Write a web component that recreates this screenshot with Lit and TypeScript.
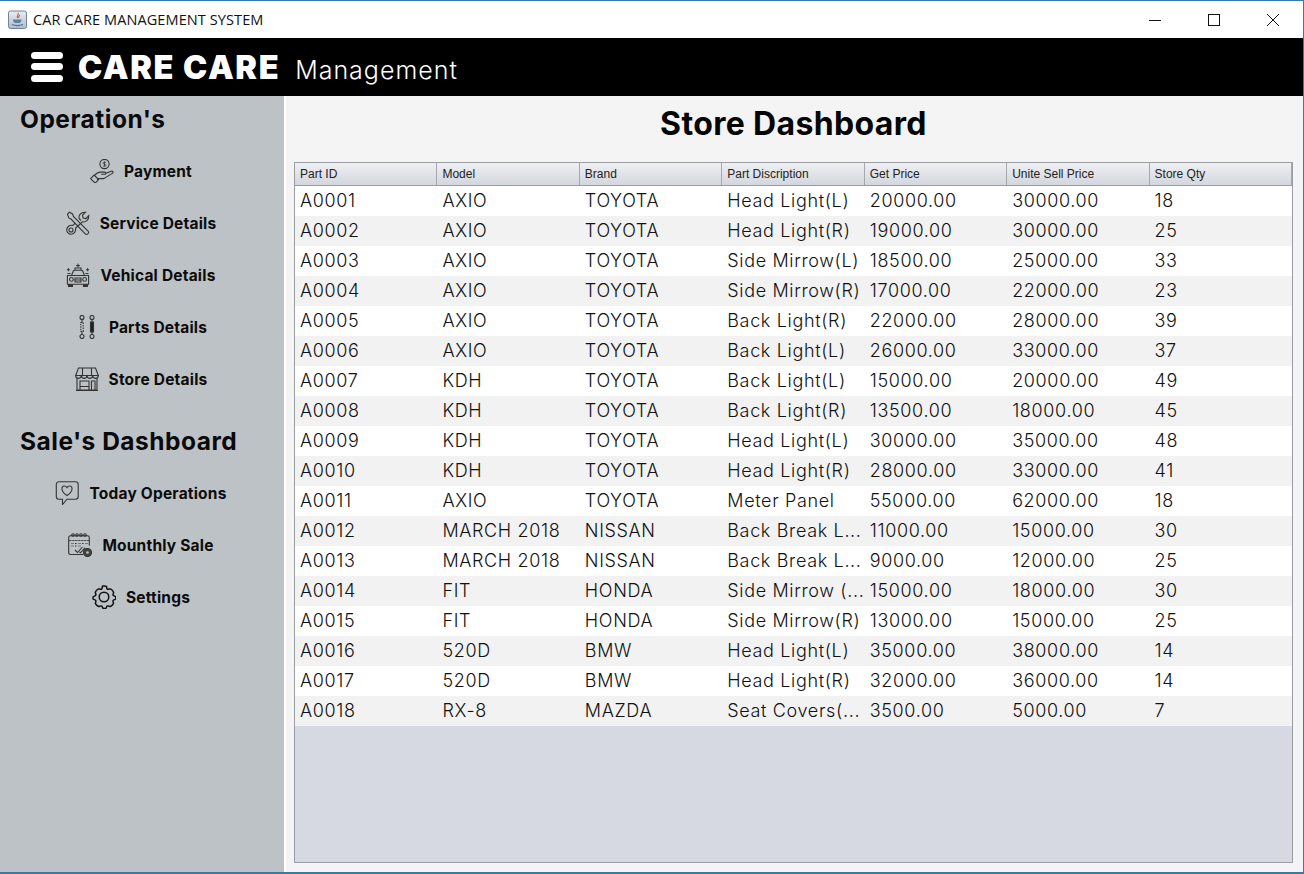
import { LitElement, html, css, svg } from "lit";
import { customElement } from "lit/decorators.js";

const columns = ["Part ID", "Model", "Brand", "Part Discription", "Get Price", "Unite Sell Price", "Store Qty"];

const rows = [
  ["A0001", "AXIO", "TOYOTA", "Head Light(L)", "20000.00", "30000.00", "18"],
  ["A0002", "AXIO", "TOYOTA", "Head Light(R)", "19000.00", "30000.00", "25"],
  ["A0003", "AXIO", "TOYOTA", "Side Mirrow(L)", "18500.00", "25000.00", "33"],
  ["A0004", "AXIO", "TOYOTA", "Side Mirrow(R)", "17000.00", "22000.00", "23"],
  ["A0005", "AXIO", "TOYOTA", "Back Light(R)", "22000.00", "28000.00", "39"],
  ["A0006", "AXIO", "TOYOTA", "Back Light(L)", "26000.00", "33000.00", "37"],
  ["A0007", "KDH", "TOYOTA", "Back Light(L)", "15000.00", "20000.00", "49"],
  ["A0008", "KDH", "TOYOTA", "Back Light(R)", "13500.00", "18000.00", "45"],
  ["A0009", "KDH", "TOYOTA", "Head Light(L)", "30000.00", "35000.00", "48"],
  ["A0010", "KDH", "TOYOTA", "Head Light(R)", "28000.00", "33000.00", "41"],
  ["A0011", "AXIO", "TOYOTA", "Meter Panel", "55000.00", "62000.00", "18"],
  ["A0012", "MARCH 2018", "NISSAN", "Back Break L...", "11000.00", "15000.00", "30"],
  ["A0013", "MARCH 2018", "NISSAN", "Back Break L...", "9000.00", "12000.00", "25"],
  ["A0014", "FIT", "HONDA", "Side Mirrow (...", "15000.00", "18000.00", "30"],
  ["A0015", "FIT", "HONDA", "Side Mirrow(R)", "13000.00", "15000.00", "25"],
  ["A0016", "520D", "BMW", "Head Light(L)", "35000.00", "38000.00", "14"],
  ["A0017", "520D", "BMW", "Head Light(R)", "32000.00", "36000.00", "14"],
  ["A0018", "RX-8", "MAZDA", "Seat Covers(...", "3500.00", "5000.00", "7"],
];

const icons = {
  payment: svg`<circle cx="14.5" cy="5" r="4.6"/><path d="M14.5 2.600v4.800M16 3.600c-.8-.7-3-.7-3 .6s3 .9 3 2.100-2.200 1.300-3 .6" stroke-width=".8"/><path d="M4.500 16.500c2-2.500 4-3.400 6-3.400h4.200c1.400 0 1.400 2.200 0 2.200h-3.400M15.500 14.600l5.600-2.400c1.800-.6 2.800 1.200 1.200 2.200l-7.300 4.500c-1.600.9-3.300.9-5 .6-1-.2-2 .2-3 1"/><path d="M.6 19.600l3.500-3.600 4.600 4.600-3.600 3.600z"/>`,
  service: svg`<path d="M1.500 3.200L3.400 1.200 6.600 3 7.400 5.400 22 20c1 1.200.9 2-.2 2.900-1 .8-1.800.7-2.800-.3L5 8 2.900 7.200z"/><path d="M15 9.500l-1.900-1.900c-.8-3.200 1.400-6.600 6.400-6.400l-3 3 .6 2.800 2.700.6 3-3c.2 4.500-3.200 7-6.400 6.300L9.600 17c.9 3.400-1.700 6.300-4.500 6.300C2.600 23.300.7 21.200.7 18.900c0-3 3-5.300 6.100-4.400l2.500-2.400"/><circle cx="5" cy="19" r="2"/>`,
  vehicle: svg`<path d="M12 .6v4M10 2.600h4M2.400 5.200v3M.9 6.700h3M21.600 5.200v3M20.100 6.700h3" stroke-width="1"/><path d="M5.500 12.500l1.700-4.300c.3-.7.7-1 1.500-1h6.600c.8 0 1.200.3 1.500 1l1.700 4.300"/><path d="M9 7V5h6v2M1 12.500h22M1.400 12.500v8.800h21.200v-8.800"/><path d="M2.500 21.300V24h4v-2.700M17.500 21.300V24h4v-2.700" fill="#333"/><circle cx="5.400" cy="16.400" r="1.900"/><circle cx="18.600" cy="16.400" r="1.900"/><path d="M9 15h6v4H9zM9 17h6M1.500 10.500h3M19.500 10.500h3"/>`,
  parts: svg`<circle cx="7" cy="2.500" r="2"/><circle cx="7" cy="21.500" r="2"/><circle cx="17" cy="2.500" r="2"/><circle cx="17" cy="21.500" r="2"/><path d="M7 4.500v3M7 16.500v3M17 4.500v3M17 16.500v3"/><path d="M5.800 7.500h2.400v9H5.800z" stroke-dasharray="1.500 1"/><path d="M15.500 7h3v10h-3z" fill="#222"/>`,
  store: svg`<path d="M3.500 1h17l2.800 7.500H.7z"/><path d="M.7 8.500c0 3.800 5.300 3.800 5.650 0 .35 3.800 5.300 3.800 5.650 0 .35 3.800 5.300 3.800 5.650 0 .35 3.800 5.650 3.800 5.650 0"/><path d="M2 11v12h20V11M5 23V14h9v9M16.500 23V14h3.500v9M5 19.500h9M7.500 1v7.500M16.500 1v7.500M1 23.500h22"/>`,
  today: svg`<path d="M4 .8h16.500c1.600 0 2.700 1.100 2.700 2.700v12c0 1.600-1.100 2.700-2.700 2.700H12l-4.500 5.300v-5.300H4c-1.600 0-2.700-1.100-2.700-2.700v-12C1.300 1.900 2.400.8 4 .8z"/><path d="M12 14.500C5.500 10.500 6 5 9.400 5c1.200 0 2 .6 2.600 1.600C12.600 5.600 13.400 5 14.600 5 18 5 18.500 10.500 12 14.500z"/>`,
  sale: svg`<path d="M15 21.500H2.400c-1 0-1.700-.7-1.700-1.700V4.500c0-1 .7-1.700 1.700-1.700h17.200c1 0 1.700.7 1.700 1.700v8"/><path d="M.7 7.500h20.600M3.500 10.500h2M7 10.500h2M10.500 10.500h2M14 10.500h2M17.500 10.500h2M3.500 13h2M7 13h2M10.500 13h2" stroke-dasharray="1 .5"/><circle cx="5" cy="2" r="1.300"/><circle cx="9" cy="2" r="1.300"/><circle cx="13" cy="2" r="1.300"/><circle cx="17" cy="2" r="1.300"/><path d="M7 17l2.500 2.500 5-5.500M11.500 19l1 .8 4.500-5" stroke-width="1.100"/><circle cx="19.500" cy="19.500" r="4" fill="#444" stroke="#333"/><circle cx="19.500" cy="19.500" r="1.300" fill="#bdc2c6" stroke="none"/>`,
  settings: svg`<circle cx="12" cy="12" r="4.800" stroke="#111" stroke-width="1.500"/><path stroke="#111" stroke-width="1.500" d="M12 .9c1 0 2 .1 2.400.4.300.9.100 2.300.9 2.800.9.600 2.300-.4 3.200-.2 1 .6 2.700 2.300 3.100 3.300.1.900-1 2.100-.5 3 .5.900 2 .9 2.600 1.600.2.600.2 1.700-.1 2.400-.7.500-2.100.5-2.500 1.400-.4 1 .5 2.200.4 3-.6 1-2.200 2.500-3.200 2.900-.9 0-2-1-3-.5-.9.400-.8 1.800-1.500 2.400-.8.200-1.900.2-2.700 0-.6-.6-.6-2-1.500-2.400-1-.5-2.100.5-3 .5-1-.4-2.600-1.900-3.200-2.900-.1-.8.800-2 .4-3-.4-.9-1.800-.9-2.500-1.400-.3-.7-.3-1.800-.1-2.400.6-.7 2.100-.7 2.600-1.600.5-.9-.6-2.100-.5-3 .4-1 2.100-2.700 3.100-3.300.9-.2 2.300.8 3.200.2.800-.5.600-1.900.9-2.800C10 1 11 .9 12 .9z"/>`,
};

const menu1 = [
  ["payment", "Payment"],
  ["service", "Service Details"],
  ["vehicle", "Vehical Details"],
  ["parts", "Parts Details"],
  ["store", "Store Details"],
];

const menu2 = [
  ["today", "Today Operations"],
  ["sale", "Mounthly Sale"],
  ["settings", "Settings"],
];

@customElement("app-root")
export class AppRoot extends LitElement {
  static styles = css`
    :host {
      display: flex;
      flex-direction: column;
      width: 1304px;
      height: 874px;
      box-sizing: border-box;
      border-top: 1px solid #2f7cb8;
      border-right: 1px solid #2f7cb8;
      border-bottom: 2px solid #3a7a9c;
      background: #fff;
      overflow: hidden;
      font-family: Inter, "Liberation Sans", sans-serif;
      color: #000;
    }
    .titlebar {
      flex: 0 0 37px;
      display: flex;
      align-items: center;
      padding: 0 0 0 8px;
      background: #fff;
    }
    .titlebar .app-icon {
      width: 20px;
      height: 20px;
      margin-right: 5px;
    }
    .titlebar .name {
      font-family: "Open Sans", sans-serif;
      font-size: 14.5px;
      letter-spacing: 0.1px;
      color: #111;
    }
    .controls {
      margin-left: auto;
      margin-right: 1px;
      display: flex;
    }
    .controls button {
      width: 59px;
      height: 37px;
      padding: 0;
      border: 0;
      background: none;
      display: flex;
      align-items: center;
      justify-content: center;
    }
    .controls svg {
      width: 14px;
      height: 14px;
      fill: none;
      stroke: #111;
      stroke-width: 1;
    }
    .topbar {
      flex: 0 0 58px;
      display: flex;
      align-items: center;
      background: #000;
      color: #fff;
      padding-left: 31px;
    }
    .burger {
      display: flex;
      flex-direction: column;
      gap: 4.5px;
      width: 32px;
      margin-right: 15px;
      margin-top: -1px;
    }
    .burger i {
      display: block;
      height: 7px;
      border-radius: 3.5px;
      background: #fff;
    }
    .logo {
      font-size: 32.5px;
      font-weight: 900;
      letter-spacing: 1.6px;
      margin-right: 15px;
      margin-top: 1px;
    }
    .sub {
      font-size: 25px;
      font-weight: 300;
      letter-spacing: 1px;
      margin-top: 5px;
    }
    .main {
      flex: 1;
      display: flex;
      min-height: 0;
    }
    aside {
      flex: 0 0 284px;
      background: #bdc2c6;
      box-sizing: border-box;
      padding-top: 6px;
      margin-right: 2px;
    }
    h2 {
      margin: 0;
      padding-left: 20px;
      font-size: 24.5px;
      line-height: 34px;
      font-weight: 700;
      letter-spacing: 0.5px;
      color: #0a0a0a;
    }
    .menu {
      padding: 9px 0 0 32px;
      width: 252px;
      margin-bottom: 19px;
    }
    .menu-item {
      display: grid;
      grid-template-columns: 1fr auto 1fr;
      align-items: center;
      column-gap: 10px;
      height: 52px;
      font-size: 15.5px;
      font-weight: 700;
      letter-spacing: 0.2px;
      color: #0c0c0c;
    }
    .menu-item svg {
      justify-self: end;
      width: 24px;
      height: 24px;
      fill: none;
      stroke: #333;
      stroke-width: 1.1;
    }
    .content {
      flex: 1;
      min-width: 0;
      background: #f4f4f4;
      display: flex;
      flex-direction: column;
      padding: 0 10px 9px 8px;
    }
    h1 {
      margin: 0;
      height: 66px;
      line-height: 55px;
      text-align: center;
      font-size: 32px;
      font-weight: 700;
      letter-spacing: 0.35px;
      color: #050505;
    }
    .table {
      flex: 1;
      min-height: 0;
      border: 1px solid #9a9ea3;
      background: #d6d9e1;
    }
    .row {
      display: grid;
      grid-template-columns: repeat(7, 1fr);
    }
    .head {
      height: 22px;
      background: linear-gradient(#eff0f3, #d3d6dd);
      border-bottom: 1px solid #9a9ea3;
      font-family: "Liberation Sans", sans-serif;
      font-size: 12px;
      line-height: 22px;
      color: #222;
    }
    .head span {
      padding-left: 5px;
      border-right: 1px solid #a4a8ae;
    }
    .body {
      height: 30px;
      background: #fff;
      font-size: 18px;
      font-weight: 300;
      letter-spacing: 0.65px;
      line-height: 30px;
      color: #111;
    }
    .body:nth-child(even) {
      background: #f2f2f2;
    }
    .body span {
      padding-left: 5px;
      white-space: nowrap;
      overflow: hidden;
    }
  `;

  private renderMenu(items: string[][]) {
    return html`<div class="menu">
      ${items.map(
        ([icon, label]) => html`<div class="menu-item">
          <svg viewBox="0 0 24 24">${icons[icon as keyof typeof icons]}</svg>
          <span>${label}</span>
        </div>`
      )}
    </div>`;
  }

  render() {
    return html`
      <div class="titlebar">
        <svg class="app-icon" viewBox="0 0 20 20">
          <defs>
            <linearGradient id="jv" x1="0" y1="0" x2="0" y2="1">
              <stop offset="0" stop-color="#e8edf3"/>
              <stop offset="1" stop-color="#aebccb"/>
            </linearGradient>
          </defs>
          <rect x=".5" y="1" width="18" height="17.500" rx="2" fill="url(#jv)" stroke="#6f8296"/>
          <path d="M10 3c1.500 1.500-2 3-.5 5M11.500 5c.5 1-1.500 1.500-.8 3" fill="none" stroke="#d4552a" stroke-width="1.100"/>
          <path d="M5 9.500h8.500c-.2 3-1.500 3.500-4.200 3.500S5.200 12.500 5 9.500z" fill="#5b82a8"/>
          <path d="M4 14.500c3 1.200 8 1.200 11 0" fill="none" stroke="#4b7298" stroke-width="1.100"/>
        </svg>
        <span class="name">CAR CARE MANAGEMENT SYSTEM</span>
        <div class="controls">
          <button><svg viewBox="0 0 14 14"><path d="M1 7.500h12"/></svg></button>
          <button><svg viewBox="0 0 14 14"><rect x="1.500" y="1.500" width="11" height="11"/></svg></button>
          <button><svg viewBox="0 0 14 14"><path d="M1 1l12 12M13 1L1 13"/></svg></button>
        </div>
      </div>
      <div class="topbar">
        <div class="burger"><i></i><i></i><i></i></div>
        <span class="logo">CARE CARE</span>
        <span class="sub">Management</span>
      </div>
      <div class="main">
        <aside>
          <h2>Operation's</h2>
          ${this.renderMenu(menu1)}
          <h2>Sale's Dashboard</h2>
          ${this.renderMenu(menu2)}
        </aside>
        <section class="content">
          <h1>Store Dashboard</h1>
          <div class="table">
            <div class="row head">${columns.map((c) => html`<span>${c}</span>`)}</div>
            <div class="rows">
              ${rows.map((r) => html`<div class="row body">${r.map((c) => html`<span>${c}</span>`)}</div>`)}
            </div>
          </div>
        </section>
      </div>
    `;
  }
}
